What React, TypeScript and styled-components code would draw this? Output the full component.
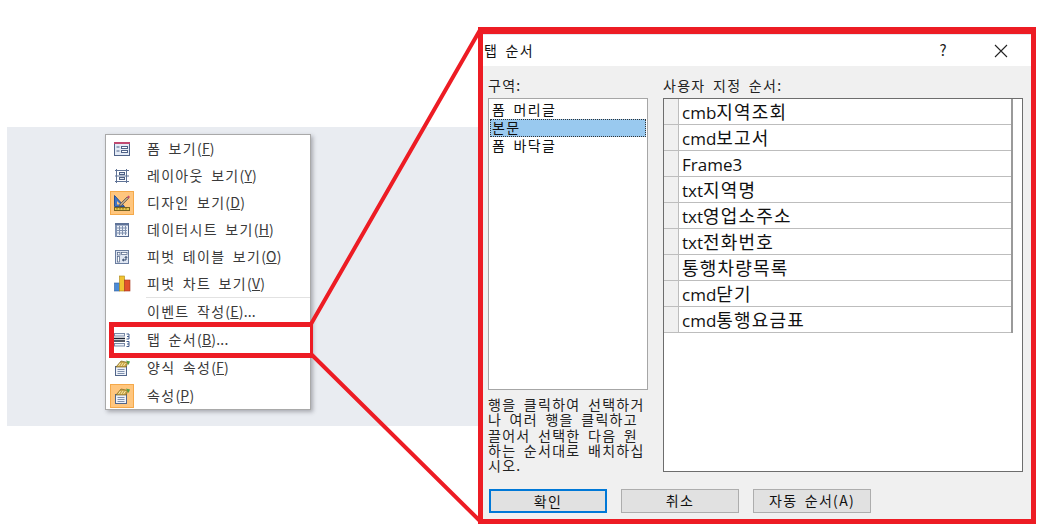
import styled, { createGlobalStyle } from 'styled-components';
import type { ReactNode } from 'react';

const GlobalStyle = createGlobalStyle`
  html, body {
    margin: 0;
    padding: 0;
    background: #ffffff;
  }
`;

const uiFont = `"Noto Sans CJK KR", "Noto Sans", sans-serif`;

const wideText = `
  font-size: 14px;
  letter-spacing: 1.3px;
  word-spacing: 3px;
`;

const Stage = styled.div`
  position: relative;
  display: flex;
  align-items: flex-start;
  width: 1053px;
  height: 529px;
  overflow: hidden;
  font-family: ${uiFont};
`;

const Band = styled.div`
  flex: none;
  width: 471px;
  height: 299px;
  margin: 127px 0 0 7px;
  padding: 7px 0 0 98px;
  box-sizing: border-box;
  background: #e9ecf1;
`;

/* context menu */
const Menu = styled.div`
  width: 206px;
  height: 276px;
  box-sizing: border-box;
  border: 1px solid #a9a9a9;
  background: #ffffff;
  box-shadow: 2px 2px 4px rgba(90, 90, 100, 0.45);
`;

const MenuRow = styled.div<{ $tall?: boolean }>`
  display: flex;
  align-items: center;
  height: ${(p) => (p.$tall ? 28 : 27)}px;
  padding-left: 4px;
`;

const IconTile = styled.span<{ $active?: boolean }>`
  display: flex;
  flex: none;
  align-items: center;
  justify-content: center;
  width: 24px;
  height: 24px;
  box-sizing: border-box;
  border: 1px solid ${(p) => (p.$active ? '#f5a94a' : 'transparent')};
  background: ${(p) => (p.$active ? '#ffc67e' : 'transparent')};
`;

const MenuLabel = styled.span`
  margin-left: 13px;
  padding-bottom: 2px;
  ${wideText}
  color: #3a3a3a;
  white-space: nowrap;
`;

const Accel = styled.span`
  letter-spacing: 0.2px;
`;

const MenuDivider = styled.div`
  height: 1px;
  margin-left: 40px;
  background: #e2e2e2;
`;

/* tab order dialog */
const Dialog = styled.div`
  display: flex;
  flex: none;
  flex-direction: column;
  width: 558px;
  height: 497px;
  margin-top: 27px;
  box-sizing: border-box;
  border: 5px solid #ed1c24;
  border-top-width: 7px;
  background: #f0f0f0;
  color: #111111;
`;

const TitleBar = styled.div`
  display: flex;
  flex: none;
  align-items: center;
  height: 32px;
  padding-left: 1px;
  box-sizing: border-box;
  border-top: 1px solid #e6e6ee;
  background: #ffffff;
`;

const TitleText = styled.span`
  flex: 1;
  padding-bottom: 2px;
  ${wideText}
`;

const HelpMark = styled.span`
  width: 102px;
  padding-bottom: 2px;
  font-size: 15px;
  text-align: center;
  color: #222222;
`;

const CloseMark = styled.svg`
  width: 14px;
  height: 14px;
  margin-right: 23px;
`;

const Body = styled.div`
  display: flex;
  flex: 1;
  gap: 15px;
  padding: 9px 8px 0 5px;
`;

const LeftColumn = styled.div`
  display: flex;
  flex: none;
  flex-direction: column;
  width: 160px;
`;

const RightColumn = styled.div`
  display: flex;
  flex: none;
  flex-direction: column;
  width: 360px;
`;

const FieldLabel = styled.div`
  flex: none;
  height: 23px;
  ${wideText}
  line-height: 20px;
  color: #222222;
`;

const SectionList = styled.div`
  flex: none;
  height: 292px;
  padding: 2px 1px;
  box-sizing: border-box;
  border: 1px solid #a6a6a6;
  background: #ffffff;
`;

const SectionItem = styled.div<{ $selected?: boolean }>`
  height: 18px;
  padding-left: 1px;
  box-sizing: border-box;
  border: 1px dotted ${(p) => (p.$selected ? '#333333' : 'transparent')};
  background: ${(p) => (p.$selected ? '#99c9ef' : 'transparent')};
  ${wideText}
  line-height: 15px;
  white-space: nowrap;
`;

const HelpText = styled.p`
  margin: 7px 0 0;
  ${wideText}
  line-height: 15.3px;
  color: #222222;
  word-break: break-all;
`;

const OrderGrid = styled.div`
  flex: none;
  height: 374px;
  box-sizing: border-box;
  border: 1px solid #6d6d6d;
  background: #ffffff;
`;

const OrderRows = styled.div`
  width: 349px;
  box-sizing: border-box;
  border-right: 2px solid #9a9a9a;
`;

const OrderRow = styled.div`
  display: flex;
  height: 26px;
  box-sizing: border-box;
  border-bottom: 1px solid #bdbdbd;
`;

const RowHandle = styled.span`
  flex: none;
  width: 14px;
  border-right: 1px solid #bdbdbd;
  background: #f0f0f0;
`;

const RowName = styled.span`
  padding-left: 3px;
  line-height: 25px;
  color: #111111;
  white-space: nowrap;
`;

const RowCode = styled.span`
  font-family: "Open Sans", sans-serif;
  font-size: 17px;
`;

const RowHangul = styled.span`
  font-size: 18px;
  letter-spacing: 1.2px;
`;

const ButtonBar = styled.div`
  display: flex;
  flex: none;
  gap: 14px;
  padding: 0 0 6px 6px;
`;

const DialogButton = styled.button<{ $primary?: boolean }>`
  width: 118px;
  height: 24px;
  padding: 0 0 2px;
  box-sizing: border-box;
  border: ${(p) => (p.$primary ? '2px solid #0078d7' : '1px solid #adadad')};
  border-radius: 0;
  background: #e1e1e1;
  font-family: ${uiFont};
  ${wideText}
  color: #111111;
`;

const Callout = styled.svg`
  position: absolute;
  top: 0;
  left: 0;
  width: 1053px;
  height: 529px;
  pointer-events: none;
`;

const FormIcon = () => (
  <svg width="16" height="16" viewBox="0 0 16 16">
    <rect x="0.5" y="1.5" width="15" height="13" fill="#e4ebf6" stroke="#4f6288" />
    <rect x="0" y="1" width="16" height="2" fill="#c04a72" />
    <path d="M2.5 6h3M2.5 10h3" stroke="#4f6288" />
    <rect x="7.5" y="5.5" width="6" height="2" fill="#fff" stroke="#4f6288" />
    <rect x="7.5" y="9.5" width="6" height="2" fill="#fff" stroke="#4f6288" />
  </svg>
);

const LayoutIcon = () => (
  <svg width="16" height="16" viewBox="0 0 16 16">
    <path d="M2.5 1v14M12.5 1v14M1 2.5h14M1 13.5h14M1 8h14" stroke="#5f7396" fill="none" />
    <rect x="5.5" y="4.5" width="5" height="2" fill="#dfe6f2" stroke="#4d6084" />
    <rect x="5.5" y="9.5" width="5" height="2" fill="#dfe6f2" stroke="#4d6084" />
  </svg>
);

const DesignIcon = () => (
  <svg width="18" height="18" viewBox="0 0 18 18">
    <path d="M1.5 1.5v11h10z" fill="#3f74c4" stroke="#274f91" />
    <path d="M4 7v3.5h3.5z" fill="#ffc67e" />
    <path d="M7 10l7-7 1.5 1.5-7 7-2.5 1z" fill="#b9a48a" stroke="#5b4a3a" strokeWidth="0.7" />
    <path d="M14 3l1.5-1.5 1.5 1.5-1.5 1.5z" fill="#c04a72" />
    <rect x="1.5" y="13.5" width="15" height="3" fill="#e8c64a" stroke="#7a6420" />
    <path d="M4 14v1.5M7 14v1.5M10 14v1.5M13 14v1.5" stroke="#7a6420" />
  </svg>
);

const SheetIcon = () => (
  <svg width="16" height="16" viewBox="0 0 16 16">
    <rect x="1.5" y="1.5" width="13" height="13" fill="#eef2f9" stroke="#55688c" />
    <rect x="1" y="1" width="14" height="2.5" fill="#5f7398" />
    <path d="M3 6h10M3 8.5h10M3 11h10" stroke="#7f90ae" />
    <path d="M5.5 4v9M8.5 4v9M11.5 4v9" stroke="#7f90ae" />
    <rect x="1" y="3" width="2" height="12" fill="#7f92b3" />
  </svg>
);

const PivotTableIcon = () => (
  <svg width="16" height="16" viewBox="0 0 16 16">
    <rect x="1.5" y="1.5" width="13" height="13" fill="#dfe6f2" stroke="#6a7d9f" />
    <rect x="3.5" y="3.5" width="2.5" height="2.5" fill="#fff" stroke="#4d6084" strokeWidth="0.7" />
    <rect x="7.5" y="3.5" width="5.5" height="2" fill="#fff" stroke="#4d6084" strokeWidth="0.7" />
    <rect x="3.5" y="7.5" width="2" height="5.5" fill="#fff" stroke="#4d6084" strokeWidth="0.7" />
    <path d="M12 7.5v3.5H8.5M8.5 11l1.5-1.2M8.5 11l1.5 1.2M12 7.5l-1.2 1.4M12 7.5l1.2 1.4" stroke="#2f4468" fill="none" strokeWidth="1" />
  </svg>
);

const PivotChartIcon = () => (
  <svg width="17" height="17" viewBox="0 0 17 17">
    <rect x="0.5" y="8" width="5" height="8" fill="#4b8bd8" stroke="#2f5f9e" strokeWidth="0.6" />
    <rect x="5.5" y="1" width="5" height="15" fill="#f1c232" stroke="#a98513" strokeWidth="0.6" />
    <rect x="10.5" y="5" width="5.5" height="11" fill="#e2502c" stroke="#a5321a" strokeWidth="0.6" />
  </svg>
);

const TabOrderIcon = () => (
  <svg width="16" height="16" viewBox="0 0 16 16">
    <rect x="0.5" y="1.5" width="10" height="2.5" fill="#eef2f9" stroke="#7788a6" />
    <rect x="0.5" y="11.5" width="10" height="2.5" fill="#eef2f9" stroke="#7788a6" />
    <path d="M0 6.5h11M0 9h11" stroke="#1c2536" strokeWidth="1.4" />
    <path d="M12.5 2h2.5v2.5h-2M15 4.5v2.5h-2.5M12.5 9.5H15V12h-2M15 12v2.5h-2.5" stroke="#3f5a8c" fill="none" />
  </svg>
);

const PropertyIcon = () => (
  <svg width="18" height="18" viewBox="0 0 18 18">
    <rect x="2.5" y="7.5" width="11" height="9" fill="#eef2f9" stroke="#51658a" />
    <path d="M4.5 10.5h7M4.5 12.5h7M4.5 14.5h7" stroke="#7f90ae" />
    <path d="M3 8l5-6 7 1.5-2 4.5z" fill="#c9a648" stroke="#7d6622" strokeWidth="0.7" />
    <path d="M5.5 7l2-3M8 7l2-3M10.5 7l2-3" stroke="#f7e7ad" />
    <path d="M13 1.5l4 1-1.5 3.5z" fill="#55a046" />
  </svg>
);

type MenuEntry = {
  icon?: ReactNode;
  text: string;
  accel: string;
  dots?: boolean;
  active?: boolean;
};

const topEntries: MenuEntry[] = [
  { icon: <FormIcon />, text: '폼 보기', accel: 'F' },
  { icon: <LayoutIcon />, text: '레이아웃 보기', accel: 'Y' },
  { icon: <DesignIcon />, text: '디자인 보기', accel: 'D', active: true },
  { icon: <SheetIcon />, text: '데이터시트 보기', accel: 'H' },
  { icon: <PivotTableIcon />, text: '피벗 테이블 보기', accel: 'O' },
  { icon: <PivotChartIcon />, text: '피벗 차트 보기', accel: 'V' },
];

const bottomEntries: MenuEntry[] = [
  { text: '이벤트 작성', accel: 'E', dots: true },
  { icon: <TabOrderIcon />, text: '탭 순서', accel: 'B', dots: true },
  { icon: <PropertyIcon />, text: '양식 속성', accel: 'F' },
  { icon: <PropertyIcon />, text: '속성', accel: 'P', active: true },
];

const orderNames = [
  { code: 'cmb', label: '지역조회' },
  { code: 'cmd', label: '보고서' },
  { code: 'Frame3', label: '' },
  { code: 'txt', label: '지역명' },
  { code: 'txt', label: '영업소주소' },
  { code: 'txt', label: '전화번호' },
  { code: '', label: '통행차량목록' },
  { code: 'cmd', label: '닫기' },
  { code: 'cmd', label: '통행요금표' },
];

const renderEntry = (entry: MenuEntry, tall: boolean) => (
  <MenuRow key={entry.text} $tall={tall}>
    <IconTile $active={entry.active}>{entry.icon}</IconTile>
    <MenuLabel>
      {entry.text}
      <Accel>
        (<u>{entry.accel}</u>){entry.dots ? '...' : ''}
      </Accel>
    </MenuLabel>
  </MenuRow>
);

export default function App() {
  return (
    <Stage>
      <GlobalStyle />
      <Band>
        <Menu>
          {topEntries.map((entry) => renderEntry(entry, false))}
          <MenuDivider />
          {bottomEntries.map((entry) => renderEntry(entry, true))}
        </Menu>
      </Band>
      <Dialog>
        <TitleBar>
          <TitleText>탭 순서</TitleText>
          <HelpMark>?</HelpMark>
          <CloseMark viewBox="0 0 14 14">
            <path d="M1 1l12 12M13 1L1 13" stroke="#222222" strokeWidth="1.1" fill="none" />
          </CloseMark>
        </TitleBar>
        <Body>
          <LeftColumn>
            <FieldLabel>구역:</FieldLabel>
            <SectionList>
              <SectionItem>폼 머리글</SectionItem>
              <SectionItem $selected>본문</SectionItem>
              <SectionItem>폼 바닥글</SectionItem>
            </SectionList>
            <HelpText>
              행을 클릭하여 선택하거나 여러 행을 클릭하고 끌어서 선택한 다음 원하는 순서대로 배치하십시오.
            </HelpText>
          </LeftColumn>
          <RightColumn>
            <FieldLabel>사용자 지정 순서:</FieldLabel>
            <OrderGrid>
              <OrderRows>
                {orderNames.map((name) => (
                  <OrderRow key={name.code + name.label}>
                    <RowHandle />
                    <RowName>
                      <RowCode>{name.code}</RowCode>
                      <RowHangul>{name.label}</RowHangul>
                    </RowName>
                  </OrderRow>
                ))}
              </OrderRows>
            </OrderGrid>
          </RightColumn>
        </Body>
        <ButtonBar>
          <DialogButton $primary>확인</DialogButton>
          <DialogButton>취소</DialogButton>
          <DialogButton>자동 순서(A)</DialogButton>
        </ButtonBar>
      </Dialog>
      <Callout viewBox="0 0 1053 529">
        <path d="M109 322H313V358H109ZM114 327V353H310V327Z" fill="#ed1c24" fillRule="evenodd" />
        <path d="M311 324L480 30M311 354L481 522" fill="none" stroke="#ed1c24" strokeWidth="4" />
      </Callout>
    </Stage>
  );
}
